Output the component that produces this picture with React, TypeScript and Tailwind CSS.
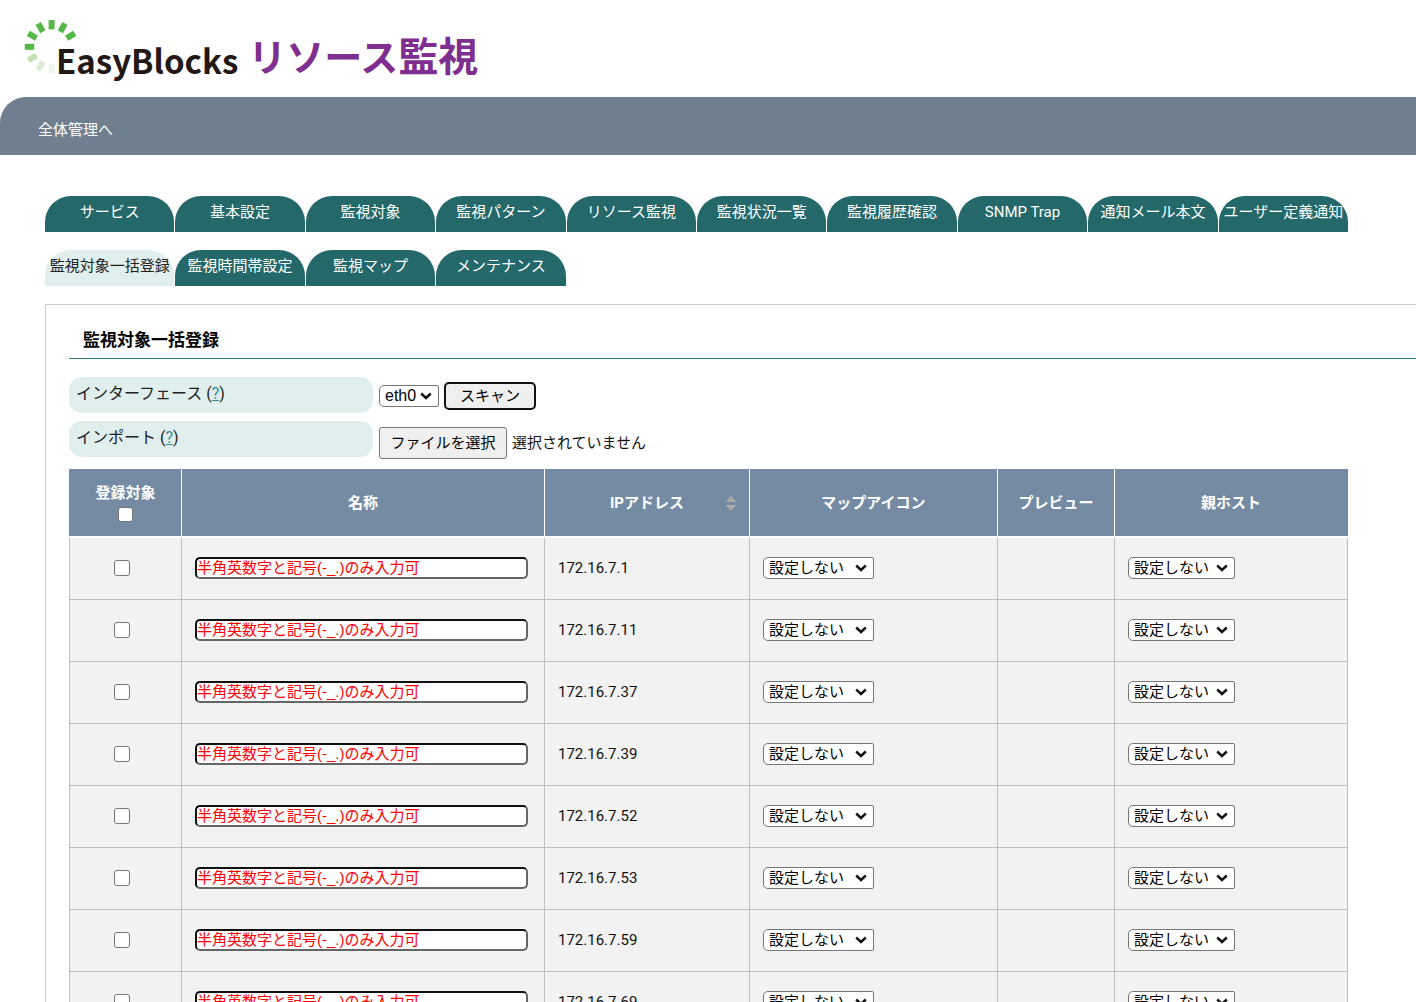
import React from 'react';

const mainTabs = [
  'サービス',
  '基本設定',
  '監視対象',
  '監視パターン',
  'リソース監視',
  '監視状況一覧',
  '監視履歴確認',
  'SNMP Trap',
  '通知メール本文',
  'ユーザー定義通知',
];

const subTabs = ['監視対象一括登録', '監視時間帯設定', '監視マップ', 'メンテナンス'];

const hosts = [
  '172.16.7.1',
  '172.16.7.11',
  '172.16.7.37',
  '172.16.7.39',
  '172.16.7.52',
  '172.16.7.53',
  '172.16.7.59',
  '172.16.7.69',
];

const rays = [
  { angle: 60, color: '#55b848' },
  { angle: 30, color: '#55b848' },
  { angle: 0, color: '#55b848' },
  { angle: -30, color: '#55b848' },
  { angle: -60, color: '#55b848' },
  { angle: -90, color: '#55b848' },
  { angle: -120, color: '#c3e0b4' },
  { angle: -150, color: '#deedd5' },
  { angle: -180, color: '#edf5e8' },
];

function Logo() {
  return (
    <h1 className="relative flex h-[97px] items-start whitespace-nowrap pl-14 pt-[30px] font-['Noto_Sans_CJK_JP',sans-serif] leading-[48px]">
      <svg className="absolute left-6 top-5" width="54" height="54" viewBox="0 0 54 54" aria-hidden="true">
        {rays.map((ray) => (
          <rect
            key={ray.angle}
            x="24.6"
            y="0"
            width="6"
            height="9.4"
            fill={ray.color}
            transform={`rotate(${ray.angle} 27.6 26.8)`}
          />
        ))}
      </svg>
      <span className="relative pt-1.5 text-[33px] font-bold text-[#231815]">EasyBlocks</span>
      <span className="ml-2.5 text-[38px] font-bold text-[#7f2f8f]">
        リソース<span className="text-[40px]">監視</span>
      </span>
    </h1>
  );
}

function Tab({ label, active = false }: { label: string; active?: boolean }) {
  return (
    <a
      href="#"
      className={
        active
          ? 'flex h-9 justify-center whitespace-nowrap rounded-t-[26px] bg-[#e0eeee] leading-8 text-[#222]'
          : 'flex h-9 justify-center whitespace-nowrap rounded-t-[26px] bg-[#246869] leading-8 text-white'
      }
    >
      {label}
    </a>
  );
}

function Select({ label, option, className }: { label: string; option: string; className: string }) {
  return (
    <span className={`relative block ${className}`}>
      <select
        aria-label={label}
        className="block h-[22px] w-full appearance-none rounded-l-[5px] rounded-r-xs border border-[#767676] bg-white pl-[5px] leading-5 text-black"
      >
        <option>{option}</option>
      </select>
      <svg
        className="pointer-events-none absolute right-[7px] top-[7px]"
        width="12"
        height="8"
        viewBox="0 0 12 8"
        fill="none"
        stroke="#111"
        strokeWidth="2.4"
        aria-hidden="true"
      >
        <path d="M1.2 1.5 L6 6 L10.8 1.5" />
      </svg>
    </span>
  );
}

function FieldLabel({ text, htmlFor }: { text: string; htmlFor: string }) {
  return (
    <div className="h-9 w-[304px] shrink-0 rounded-[13px] bg-[#e0eeee] px-[7px] text-base leading-[34px] text-[#222]">
      <label htmlFor={htmlFor}>{text}</label> (
      <a href="#" className="text-[#2f9296] underline">
        ?
      </a>
      )
    </div>
  );
}

function HeaderCell({ children }: { children: React.ReactNode }) {
  return (
    <th className="relative border-x border-b-2 border-white bg-[#758ba3] p-0 font-bold leading-5 text-white first:border-l-[#758ba3] last:border-r-[#758ba3]">
      {children}
    </th>
  );
}

export default function App() {
  return (
    <div className="h-screen overflow-x-hidden overflow-y-auto bg-white font-[Roboto,'Noto_Sans_CJK_JP',sans-serif] text-[15px] text-[#111] [scrollbar-width:none]">
      <header>
        <Logo />
        <nav className="flex h-[58px] items-center rounded-tl-[26px] bg-[#707f8f] pl-[38px] pt-2">
          <a href="#" className="text-white">
            全体管理へ
          </a>
        </nav>
      </header>

      <main className="pl-[45px] pt-[41px]">
        <nav className="grid max-w-[1303px] grid-cols-10 gap-x-px gap-y-[18px]">
          {mainTabs.map((label) => (
            <Tab key={label} label={label} />
          ))}
          {subTabs.map((label, i) => (
            <Tab key={label} label={label} active={i === 0} />
          ))}
        </nav>

        <section className="mt-[18px] border-l border-t border-[#ccc] pl-[23px]">
          <h2 className="mt-5 border-b border-[#2f7a7b] pb-0.5 pl-3.5 text-[17px] font-bold leading-[31px] text-black">
            監視対象一括登録
          </h2>

          <div className="mt-[18px] flex flex-col gap-2">
            <div className="flex">
              <FieldLabel text="インターフェース" htmlFor="scan" />
              <div className="ml-1.5 flex h-9 items-center gap-[5px] pt-0.5">
                <Select
                  label="インターフェース"
                  option="eth0"
                  className="w-[60px] font-['Liberation_Sans',sans-serif] text-base"
                />
                <button
                  id="scan"
                  type="button"
                  className="h-7 w-[92px] rounded-[5px] border-2 border-[#111] bg-[#efefef] leading-6 text-black"
                >
                  スキャン
                </button>
              </div>
            </div>
            <div className="flex">
              <FieldLabel text="インポート" htmlFor="import" />
              <div className="ml-1.5 flex h-9 items-center gap-[5px] pt-2">
                <input id="import" type="file" className="sr-only" />
                <label
                  htmlFor="import"
                  className="h-8 w-32 shrink-0 rounded-[3px] border border-[#767676] bg-[#efefef] text-center leading-[30px] text-black"
                >
                  ファイルを選択
                </label>
                <span>選択されていません</span>
              </div>
            </div>
          </div>

          <table className="mt-3 w-[1278px] table-fixed border-collapse">
            <colgroup>
              <col className="w-[112px]" />
              <col className="w-[363px]" />
              <col className="w-[205px]" />
              <col className="w-[248px]" />
              <col className="w-[117px]" />
              <col className="w-[233px]" />
            </colgroup>
            <thead>
              <tr className="h-[68px]">
                <HeaderCell>
                  <label htmlFor="all" className="block">
                    登録対象
                  </label>
                  <input
                    id="all"
                    type="checkbox"
                    className="mx-auto mt-1 block size-[15px] appearance-none rounded-[3px] border border-[#767676] bg-white"
                  />
                </HeaderCell>
                <HeaderCell>名称</HeaderCell>
                <HeaderCell>
                  IPアドレス
                  <svg className="absolute right-3 top-[27px]" width="12" height="15" viewBox="0 0 12 15" fill="#a9a9a9" aria-hidden="true">
                    <path d="M6 0 L11.5 6 H0.5 Z M0.5 9 H11.5 L6 15 Z" />
                  </svg>
                </HeaderCell>
                <HeaderCell>マップアイコン</HeaderCell>
                <HeaderCell>プレビュー</HeaderCell>
                <HeaderCell>親ホスト</HeaderCell>
              </tr>
            </thead>
            <tbody>
              {hosts.map((ip) => (
                <tr key={ip} className="h-[62px] bg-[#f2f2f2] *:border *:border-[#bfbfbf] *:py-0">
                  <td className="pr-[7px]">
                    <input
                      type="checkbox"
                      aria-label={`${ip} を登録`}
                      className="mx-auto block size-4 appearance-none rounded-[3px] border border-[#767676] bg-white"
                    />
                  </td>
                  <td className="pl-[13px] pr-4">
                    <input
                      type="text"
                      aria-label={`${ip} の名称`}
                      placeholder="半角英数字と記号(-_.)のみ入力可"
                      className="block h-[22px] w-full rounded-[5px] border-2 border-b-[#666] border-l-[#111] border-r-[#666] border-t-[#111] bg-white pb-0.5 font-['Liberation_Sans','Noto_Sans_CJK_JP',sans-serif] leading-4 placeholder:text-[#ff0000]"
                    />
                  </td>
                  <td className="pl-[13px]">{ip}</td>
                  <td className="pl-[13px]">
                    <Select label={`${ip} のマップアイコン`} option="設定しない" className="w-[111px]" />
                  </td>
                  <td />
                  <td className="pl-[13px]">
                    <Select label={`${ip} の親ホスト`} option="設定しない" className="w-[107px]" />
                  </td>
                </tr>
              ))}
            </tbody>
          </table>
        </section>
      </main>
    </div>
  );
}
